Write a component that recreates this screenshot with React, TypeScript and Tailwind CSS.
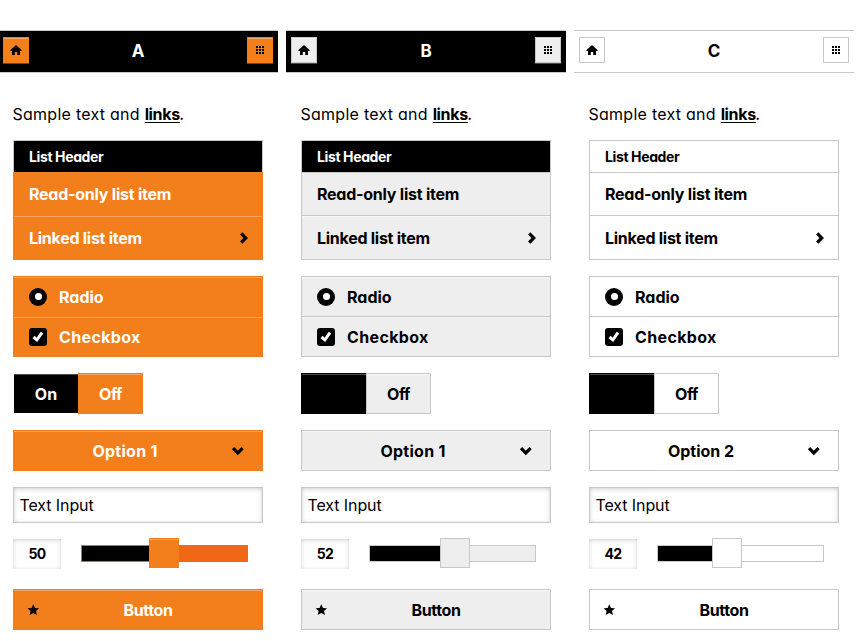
import React from "react";

type Theme = {
  title: string;
  offset: string;
  bar: string;
  barButton: string;
  header: string;
  item: string;
  row: string;
  surface: string;
  onSide: string;
  track: string;
  fill: string;
  handle: string;
  on: React.ReactNode;
  option: string;
  optionText: string;
  value: string;
};

const themes: Theme[] = [
  {
    title: "A",
    offset: "-ml-[2px]",
    bar: "bg-black text-white",
    barButton: "bg-[#f27f1b] border-[#f27f1b] shadow-[inset_0_1px_0_#f7ab69,0_1px_0_#4d4d4d]",
    header: "bg-black text-white border-[#c8c8c8]",
    item: "bg-[#f27f1b] border-[#f27f1b] text-white",
    row: "border-[#f27f1b] shadow-[inset_0_1px_0_#f7a663]",
    surface: "bg-[#f27f1b] border-[#f27f1b] text-white shadow-[inset_0_1px_0_#f7a663]",
    onSide: "my-px ml-px w-[64px]",
    track: "bg-[#f26716] border-[#f26716]",
    fill: "w-[84px]",
    handle: "left-[67px] bg-[#f27f1b] border-[#f27f1b] shadow-[inset_0_1px_0_#f7a663]",
    on: "On",
    option: "Option 1",
    optionText: "tracking-[0.25px]",
    value: "50",
  },
  {
    title: "B",
    offset: "",
    bar: "bg-black text-white",
    barButton: "bg-[#eee] border-[#c8c8c8] shadow-[inset_0_1px_0_#f6f6f6,0_1px_0_#4d4d4d]",
    header: "bg-black text-white border-[#c8c8c8]",
    item: "bg-[#eee] border-[#c8c8c8] text-black",
    row: "border-[#c8c8c8] shadow-[inset_0_1px_0_#f6f6f6]",
    surface: "bg-[#eee] border-[#c8c8c8] text-black shadow-[inset_0_1px_0_#f6f6f6]",
    onSide: "w-[65px] border border-r-0 border-black",
    track: "bg-[#eee] border-[#c8c8c8]",
    fill: "w-[86px]",
    handle: "left-[70px] bg-[#eee] border-[#c8c8c8]",
    on: null,
    option: "Option 1",
    optionText: "tracking-[0.25px]",
    value: "52",
  },
  {
    title: "C",
    offset: "",
    bar: "bg-white text-black",
    barButton: "bg-white border-[#c8c8c8]",
    header: "bg-white text-black border-[#c8c8c8]",
    item: "bg-white border-[#c8c8c8] text-black",
    row: "border-[#c8c8c8]",
    surface: "bg-white border-[#c8c8c8] text-black",
    onSide: "w-[65px] border border-r-0 border-black",
    track: "bg-white border-[#c8c8c8]",
    fill: "w-[70px]",
    handle: "left-[54px] bg-white border-[#c8c8c8]",
    on: null,
    option: "Option 2",
    optionText: "tracking-[0px]",
    value: "42",
  },
];

function HomeIcon() {
  return (
    <svg width="12" height="10" viewBox="0 0 12 10">
      <path d="M6 0 L11.8 5.2 L11.2 6 H10 V10 H7.2 V7 H4.8 V10 H2 V6 H0.8 L0.2 5.2 Z" />
    </svg>
  );
}

function GridIcon() {
  return (
    <svg width="8" height="8" viewBox="0 0 8 8" shapeRendering="crispEdges">
      {[0, 3, 6].map((y) =>
        [0, 3, 6].map((x) => <rect key={`${x}-${y}`} x={x} y={y} width="2" height="2" />)
      )}
    </svg>
  );
}

function Column({ t }: { t: Theme }) {
  return (
    <section className={`w-[280px] shrink-0 ${t.offset}`}>
      <header
        className={`flex h-[43px] items-start justify-between border-y border-[#c8c8c8] px-[5px] pt-[6px] ${t.bar}`}
      >
        <button className={`flex size-[26px] items-center justify-center border ${t.barButton}`}>
          <HomeIcon />
        </button>
        <h1 className="text-[17px] leading-[28px] font-bold">{t.title}</h1>
        <button className={`flex size-[26px] items-center justify-center border ${t.barButton}`}>
          <GridIcon />
        </button>
      </header>

      <div className="ml-[15px] w-[250px] text-[16px] font-bold">
        <p className="mt-[30px] h-[37px] leading-[22px] font-normal whitespace-pre">
          <span className="-ml-[0.5px] tracking-[0.26px]">Sample text and </span>
          <a className="font-bold tracking-[-0.35px] underline decoration-1 underline-offset-[2px]">links</a>
          <span className="-ml-[0.5px] font-medium">.</span>
        </p>

        <ul className="h-[120px]">
          <li
            className={`h-[32px] border border-b-0 pl-[15px] text-[14px] leading-[32px] tracking-[-0.38px] ${t.header}`}
          >
            List Header
          </li>
          <li className={`h-[43px] border border-b-0 pl-[15px] leading-[43px] tracking-[-0.24px] ${t.item}`}>
            Read-only list item
          </li>
          <li className={`h-[45px] border ${t.item}`}>
            <div
              className={`flex h-full items-center justify-between pr-[14px] pl-[15px] tracking-[-0.27px] ${t.row}`}
            >
              Linked list item
              <svg width="8" height="12" viewBox="0 0 8 12" fill="none" stroke="black" strokeWidth="3.2">
                <path d="M1.2 1.4 L5.8 6 L1.2 10.6" />
              </svg>
            </div>
          </li>
        </ul>

        <div className={`mt-4 h-[81px] border ${t.item}`}>
          <label className={`flex h-[39px] items-center pl-[15px] ${t.row}`}>
            <span className="mr-3 flex size-[18px] items-center justify-center rounded-full bg-black">
              <span className="size-[7px] rounded-full bg-white" />
            </span>
            Radio
          </label>
          <label className={`flex h-[40px] items-center border-t pl-[15px] tracking-[0.36px] ${t.row}`}>
            <span className="mr-3 flex size-[18px] items-center justify-center rounded-[3px] bg-black">
              <svg width="12" height="12" viewBox="0 0 12 12" fill="none" stroke="white" strokeWidth="3">
                <path d="M1.5 6 L4.9 8.9 L10 1.6" />
              </svg>
            </span>
            Checkbox
          </label>
        </div>

        <div className="mt-4 flex h-[41px] text-center leading-[41px]">
          <div className={`bg-black leading-[40px] text-white shadow-[inset_0_1px_0_#4d4d4d] ${t.onSide}`}>
            {t.on}
          </div>
          <div className={`w-[65px] border tracking-[-0.5px] ${t.surface}`}>Off</div>
        </div>

        <div className={`mt-4 flex h-[41px] items-center border ${t.surface}`}>
          <span className={`w-[222px] text-center ${t.optionText}`}>{t.option}</span>
          <svg width="14" height="10" viewBox="0 0 14 10" className="-ml-[5px]" fill="none" stroke="black" strokeWidth="3.2">
            <path d="M2 2.1 L6.8 6.9 L11.6 2.1" />
          </svg>
        </div>

        <div className="mt-4 h-[36px] border border-[#c8c8c8] bg-white pl-[5.5px] leading-[34px] font-normal tracking-[-0.1px] shadow-[inset_0_1px_4px_rgba(0,0,0,0.2)]">
          Text Input
        </div>

        <div className="mt-[15px] flex h-[31px] items-start">
          <div className="mt-px h-[30px] w-[48px] text-center text-[14px] leading-[30px] tracking-[-0.7px] shadow-[inset_0_1px_4px_rgba(0,0,0,0.2)]">
            {t.value}
          </div>
          <div className={`relative mt-[7px] ml-5 h-[17px] w-[167px] border ${t.track}`}>
            <div className={`h-full bg-black ${t.fill}`} />
            <div className={`absolute -top-[8px] size-[30px] border ${t.handle}`} />
          </div>
        </div>

        <button className={`mt-5 flex h-[41px] w-full items-center border pl-[13px] ${t.surface}`}>
          <svg width="12" height="12" viewBox="0 0 12 12" fill="black">
            <path d="M6.3 .2 L8 3.9 L12 4.3 L9 7 L9.9 11 L6.3 8.9 L2.7 11 L3.6 7 L.6 4.3 L4.6 3.9 Z" />
          </svg>
          <span className="w-[218px] text-center tracking-[-0.4px]">Button</span>
        </button>
      </div>
    </section>
  );
}

export default function App() {
  return (
    <main className="flex h-[641px] w-[858px] gap-2 overflow-hidden bg-white pt-[30px] font-['Inter',sans-serif] text-black [font-feature-settings:'cv11']">
      {themes.map((t) => (
        <Column key={t.title} t={t} />
      ))}
    </main>
  );
}
